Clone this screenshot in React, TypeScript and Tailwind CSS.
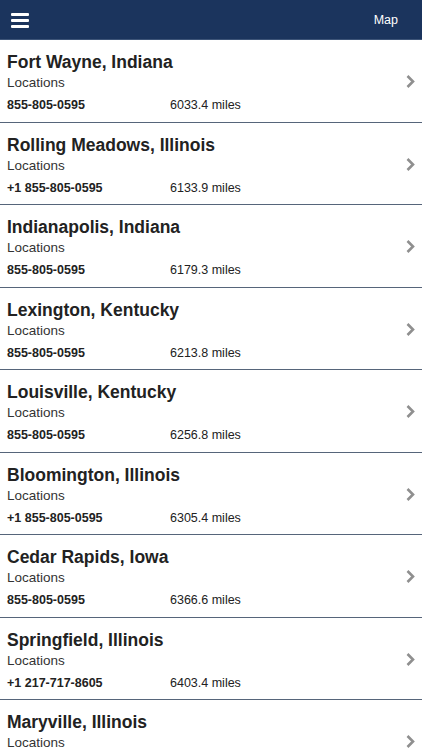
import React from 'react'

type Location = {
  city: string
  phone: string
  miles: string
}

const locations: Location[] = [
  { city: 'Fort Wayne, Indiana', phone: '855-805-0595', miles: '6033.4 miles' },
  { city: 'Rolling Meadows, Illinois', phone: '+1 855-805-0595', miles: '6133.9 miles' },
  { city: 'Indianapolis, Indiana', phone: '855-805-0595', miles: '6179.3 miles' },
  { city: 'Lexington, Kentucky', phone: '855-805-0595', miles: '6213.8 miles' },
  { city: 'Louisville, Kentucky', phone: '855-805-0595', miles: '6256.8 miles' },
  { city: 'Bloomington, Illinois', phone: '+1 855-805-0595', miles: '6305.4 miles' },
  { city: 'Cedar Rapids, Iowa', phone: '855-805-0595', miles: '6366.6 miles' },
  { city: 'Springfield, Illinois', phone: '+1 217-717-8605', miles: '6403.4 miles' },
  { city: 'Maryville, Illinois', phone: '855-805-0595', miles: '6421.7 miles' },
]

function Chevron() {
  return (
    <svg width="11" height="15" viewBox="0 0 11 15" className="shrink-0 mt-[2px]">
      <path d="M2.5 2 L8 7.5 L2.5 13" fill="none" stroke="#8f8f8f" strokeWidth="2.6" />
    </svg>
  )
}

function LocationRow({ loc }: { loc: Location }) {
  return (
    <div className="flex items-center h-[82.5px] border-b-[1.5px] border-[#56657a] pl-[7px] pr-[6px]">
      <div className="flex-1 pt-[12px] self-start">
        <div className="text-[17.5px] leading-[20px] font-bold text-[#222]">{loc.city}</div>
        <div className="text-[13.5px] leading-[22px] text-[#333]">Locations</div>
        <div className="flex mt-[3px] text-[12.5px] leading-[16px] text-[#222]">
          <span className="w-[163px] font-bold">{loc.phone}</span>
          <span>{loc.miles}</span>
        </div>
      </div>
      <Chevron />
    </div>
  )
}

export default function App() {
  return (
    <div className="h-screen overflow-hidden bg-white" style={{ fontFamily: '"Liberation Sans", Arial, sans-serif' }}>
      {/* top bar */}
      <div className="flex items-center justify-between h-[40px] bg-[#1b345d] border-b border-[#3d5478] pl-[11px] pr-[24px]">
        <div className="flex flex-col gap-[3px] mt-[1px]">
          <span className="block w-[18px] h-[3px] bg-white rounded-[1px]" />
          <span className="block w-[18px] h-[3px] bg-white rounded-[1px]" />
          <span className="block w-[18px] h-[3px] bg-white rounded-[1px]" />
        </div>
        <span className="text-white text-[12.5px] mt-[2px]">Map</span>
      </div>

      <div>
        {locations.map((loc) => (
          <LocationRow key={loc.city} loc={loc} />
        ))}
      </div>
    </div>
  )
}
